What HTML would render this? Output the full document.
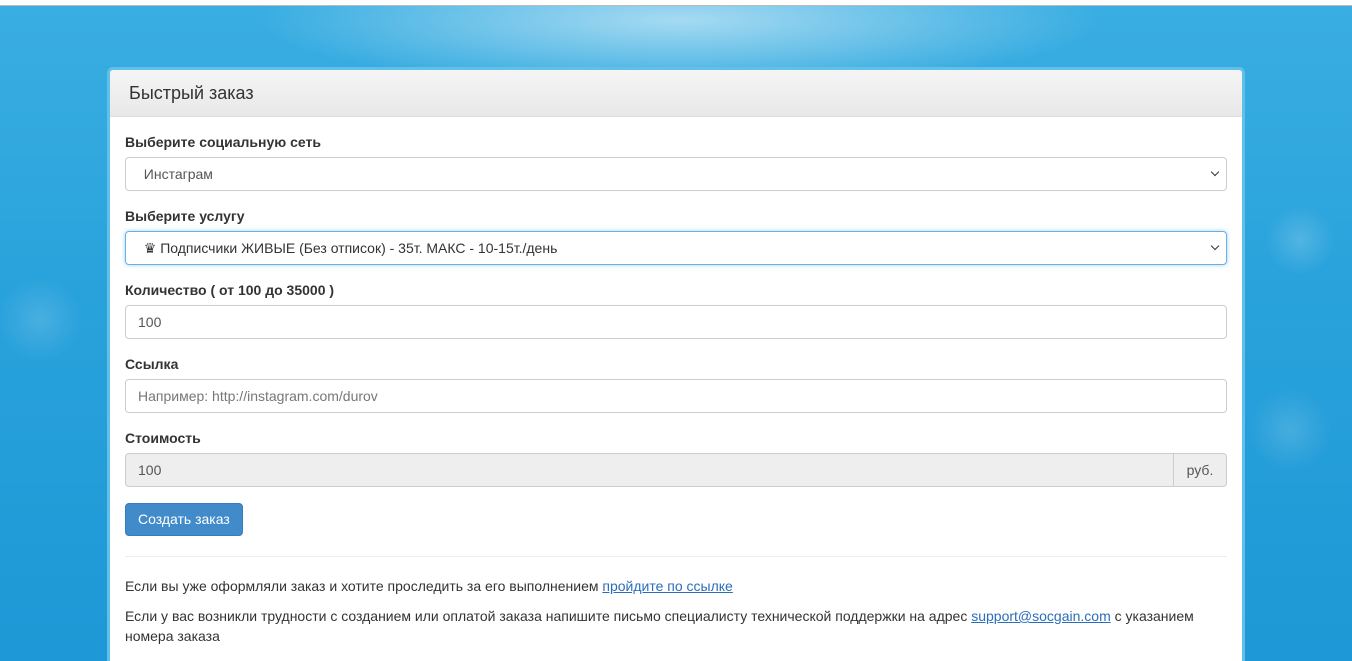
<!DOCTYPE html>
<html><head><meta charset="utf-8"><style>
*{box-sizing:border-box}
html{height:661px;overflow:hidden}
body{margin:0;width:1352px;height:661px;overflow:hidden;font-family:"Liberation Sans",Arial,sans-serif;font-size:14px;color:#333;
background:radial-gradient(ellipse 420px 70px at 680px 20px,rgba(255,255,255,.55),rgba(255,255,255,0)),
radial-gradient(circle 60px at 40px 320px,rgba(255,255,255,.15),rgba(255,255,255,0) 70%),
radial-gradient(circle 50px at 1300px 240px,rgba(255,255,255,.18),rgba(255,255,255,0) 70%),
radial-gradient(circle 60px at 1290px 430px,rgba(255,255,255,.15),rgba(255,255,255,0) 70%),
linear-gradient(180deg,#3aaee2 0%,#2aa3dc 40%,#1e98d6 100%);}
.top{position:absolute;left:0;top:0;width:1352px;height:6px;background:#fff;border-bottom:1px solid #bbb}
.panel{position:absolute;left:107px;top:67px;width:1138px;height:594px;background:#fff;border:3px solid #5fc0ea;border-bottom:none;border-radius:6px 6px 0 0;overflow:hidden}
.hd{height:47px;background:linear-gradient(#f5f5f5,#e8e8e8);border-bottom:1px solid #ddd;padding:13px 19px;font-size:18px;color:#333;border-radius:4px 4px 0 0}
.bd{padding:18px 15px}
label{display:block;font-weight:bold;margin-bottom:8px;height:14px;line-height:14px}
.fc{height:34px;border:1px solid #ccc;border-radius:4px;padding:0 12px;line-height:32px;margin-bottom:18px;position:relative;color:#555}
.sel{padding-left:10px}
.sel::after{content:"";position:absolute;right:8px;top:11px;width:5px;height:5px;border-right:1.5px solid #333;border-bottom:1.5px solid #333;transform:rotate(45deg)}
.focus{border-color:#66afe9;box-shadow:0 0 4px rgba(102,175,233,.6)}
.ph{color:#777}
.grp{display:flex;margin-bottom:16px}
.grp .fc{flex:1;background:#eee;border-radius:4px 0 0 4px;margin:0}
.addon{width:53px;height:34px;border:1px solid #ccc;border-left:none;background:#eee;border-radius:0 4px 4px 0;line-height:32px;text-align:center;color:#555}
.btn{display:inline-block;background:#428bca;border:1px solid #357ebd;color:#fff;border-radius:4px;height:33px;line-height:31px;padding:0 12px;font-size:14px;vertical-align:top}
hr{border:0;border-top:1px solid #eee;margin:20px 0 19px}
p{margin:0 0 10px;line-height:20px}
a{color:#2a6ebb;text-decoration:underline}
</style></head><body>
<div class="top"></div>
<div class="panel">
<div class="hd">Быстрый заказ</div>
<div class="bd">
<label>Выберите социальную сеть</label>
<div class="fc sel">&nbsp;&nbsp;Инстаграм</div>
<label>Выберите услугу</label>
<div class="fc sel focus" style="color:#333">&nbsp;&nbsp;♛ Подписчики ЖИВЫЕ (Без отписок) - 35т. МАКС - 10-15т./день</div>
<label>Количество ( от 100 до 35000 )</label>
<div class="fc">100</div>
<label>Ссылка</label>
<div class="fc ph">Например: http://instagram.com/durov</div>
<label>Стоимость</label>
<div class="grp"><div class="fc">100</div><div class="addon">руб.</div></div>
<span class="btn">Создать заказ</span>
<hr>
<p>Если вы уже оформляли заказ и хотите проследить за его выполнением <a>пройдите по ссылке</a></p>
<p>Если у вас возникли трудности с созданием или оплатой заказа напишите письмо специалисту технической поддержки на адрес <a>support@socgain.com</a> с указанием номера заказа</p>
</div></div>
</body></html>
